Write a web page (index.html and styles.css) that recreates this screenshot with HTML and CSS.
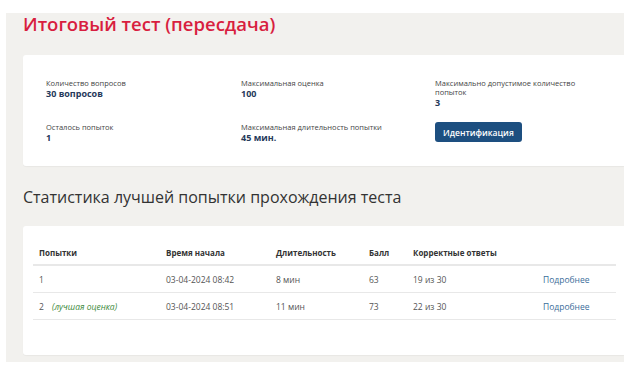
FILE: index.html
```html
<!DOCTYPE html>
<html lang="ru">
<head>
    <meta charset="UTF-8">
    <title>Итоговый тест (пересдача)</title>
    <link rel="stylesheet" href="styles.css">
</head>
<body>
    <div class="page">
        <h1 class="title">Итоговый тест (пересдача)</h1>

        <div class="card info-card">
            <div class="info-grid">
                <div class="info-item">
                    <div class="info-label">Количество вопросов</div>
                    <div class="info-value">30 вопросов</div>
                </div>
                <div class="info-item">
                    <div class="info-label">Максимальная оценка</div>
                    <div class="info-value">100</div>
                </div>
                <div class="info-item">
                    <div class="info-label">Максимально допустимое количество попыток</div>
                    <div class="info-value">3</div>
                </div>
                <div class="info-item">
                    <div class="info-label">Осталось попыток</div>
                    <div class="info-value">1</div>
                </div>
                <div class="info-item">
                    <div class="info-label">Максимальная длительность попытки</div>
                    <div class="info-value">45 мин.</div>
                </div>
                <div class="info-item">
                    <button class="btn">Идентификация</button>
                </div>
            </div>
        </div>

        <h2 class="subtitle">Статистика лучшей попытки прохождения теста</h2>

        <div class="card stats-card">
            <table class="stats">
                <thead>
                    <tr>
                        <th class="col-try">Попытки</th>
                        <th class="col-start">Время начала</th>
                        <th class="col-dur">Длительность</th>
                        <th class="col-score">Балл</th>
                        <th class="col-correct">Корректные ответы</th>
                        <th class="col-link"></th>
                    </tr>
                </thead>
                <tbody>
                    <tr>
                        <td>1</td>
                        <td>03-04-2024 08:42</td>
                        <td>8 мин</td>
                        <td>63</td>
                        <td>19 из 30</td>
                        <td><a href="#" class="more">Подробнее</a></td>
                    </tr>
                    <tr>
                        <td>2 <span class="best">(лучшая оценка)</span></td>
                        <td>03-04-2024 08:51</td>
                        <td>11 мин</td>
                        <td>73</td>
                        <td>22 из 30</td>
                        <td><a href="#" class="more">Подробнее</a></td>
                    </tr>
                </tbody>
            </table>
        </div>
    </div>
</body>
</html>
```

FILE: styles.css
```css
body {
    margin: 0;
    background-color: #fff;
    font-family: "Open Sans", Arial, sans-serif;
    color: #444;
}

.page {
    margin: 13px 0 0 6px;
    padding: 0 0 7px 17px;
    background-color: #f2f1ee;
}

.title {
    margin: 0;
    height: 42px;
    font-size: 18.5px;
    font-weight: 600;
    line-height: 22px;
    color: #d81e3f;
}

.card {
    background-color: #fff;
    border-radius: 3px 0 0 3px;
    box-shadow: 0 1px 1px rgba(0, 0, 0, 0.04);
}

.info-card {
    height: 111px;
    box-sizing: border-box;
    padding: 24px 0 0 23px;
}

.info-grid {
    display: grid;
    grid-template-columns: 195px 194px 165px;
    grid-template-rows: 44px 40px;
}

.info-label {
    font-size: 7.5px;
    line-height: 9px;
    color: #444;
}

.info-value {
    font-size: 9px;
    line-height: 11px;
    font-weight: 700;
    color: #25395a;
}

.btn {
    display: block;
    margin-top: -1px;
    padding: 0 8px;
    height: 20px;
    border: none;
    border-radius: 3px;
    background-color: #1d4f80;
    color: #fff;
    font-family: "Open Sans", Arial, sans-serif;
    font-size: 8.5px;
    font-weight: 600;
}

.subtitle {
    margin: 0;
    height: 60px;
    box-sizing: border-box;
    padding-top: 21px;
    font-size: 16px;
    font-weight: 400;
    line-height: 20px;
    color: #333;
}

.stats-card {
    height: 129px;
    box-sizing: border-box;
    padding: 15px 0 0 10px;
}

.stats {
    width: 583px;
    border-collapse: collapse;
    font-size: 8.5px;
}

.stats th,
.stats td {
    text-align: left;
    padding: 0 0 0 6px;
    height: 26px;
    color: #555;
    border-bottom: 1px solid #e8e8e8;
}

.stats th {
    height: 23px;
    font-size: 8px;
    font-weight: 700;
    color: #333;
    border-bottom-width: 2px;
}

.col-try { width: 121px; }
.col-start { width: 104px; }
.col-dur { width: 87px; }
.col-score { width: 38px; }
.col-correct { width: 124px; }

.best {
    margin-left: 6px;
    font-style: italic;
    color: #3c8a3a;
}

.more {
    color: #3a6d9a;
    text-decoration: none;
}
```
